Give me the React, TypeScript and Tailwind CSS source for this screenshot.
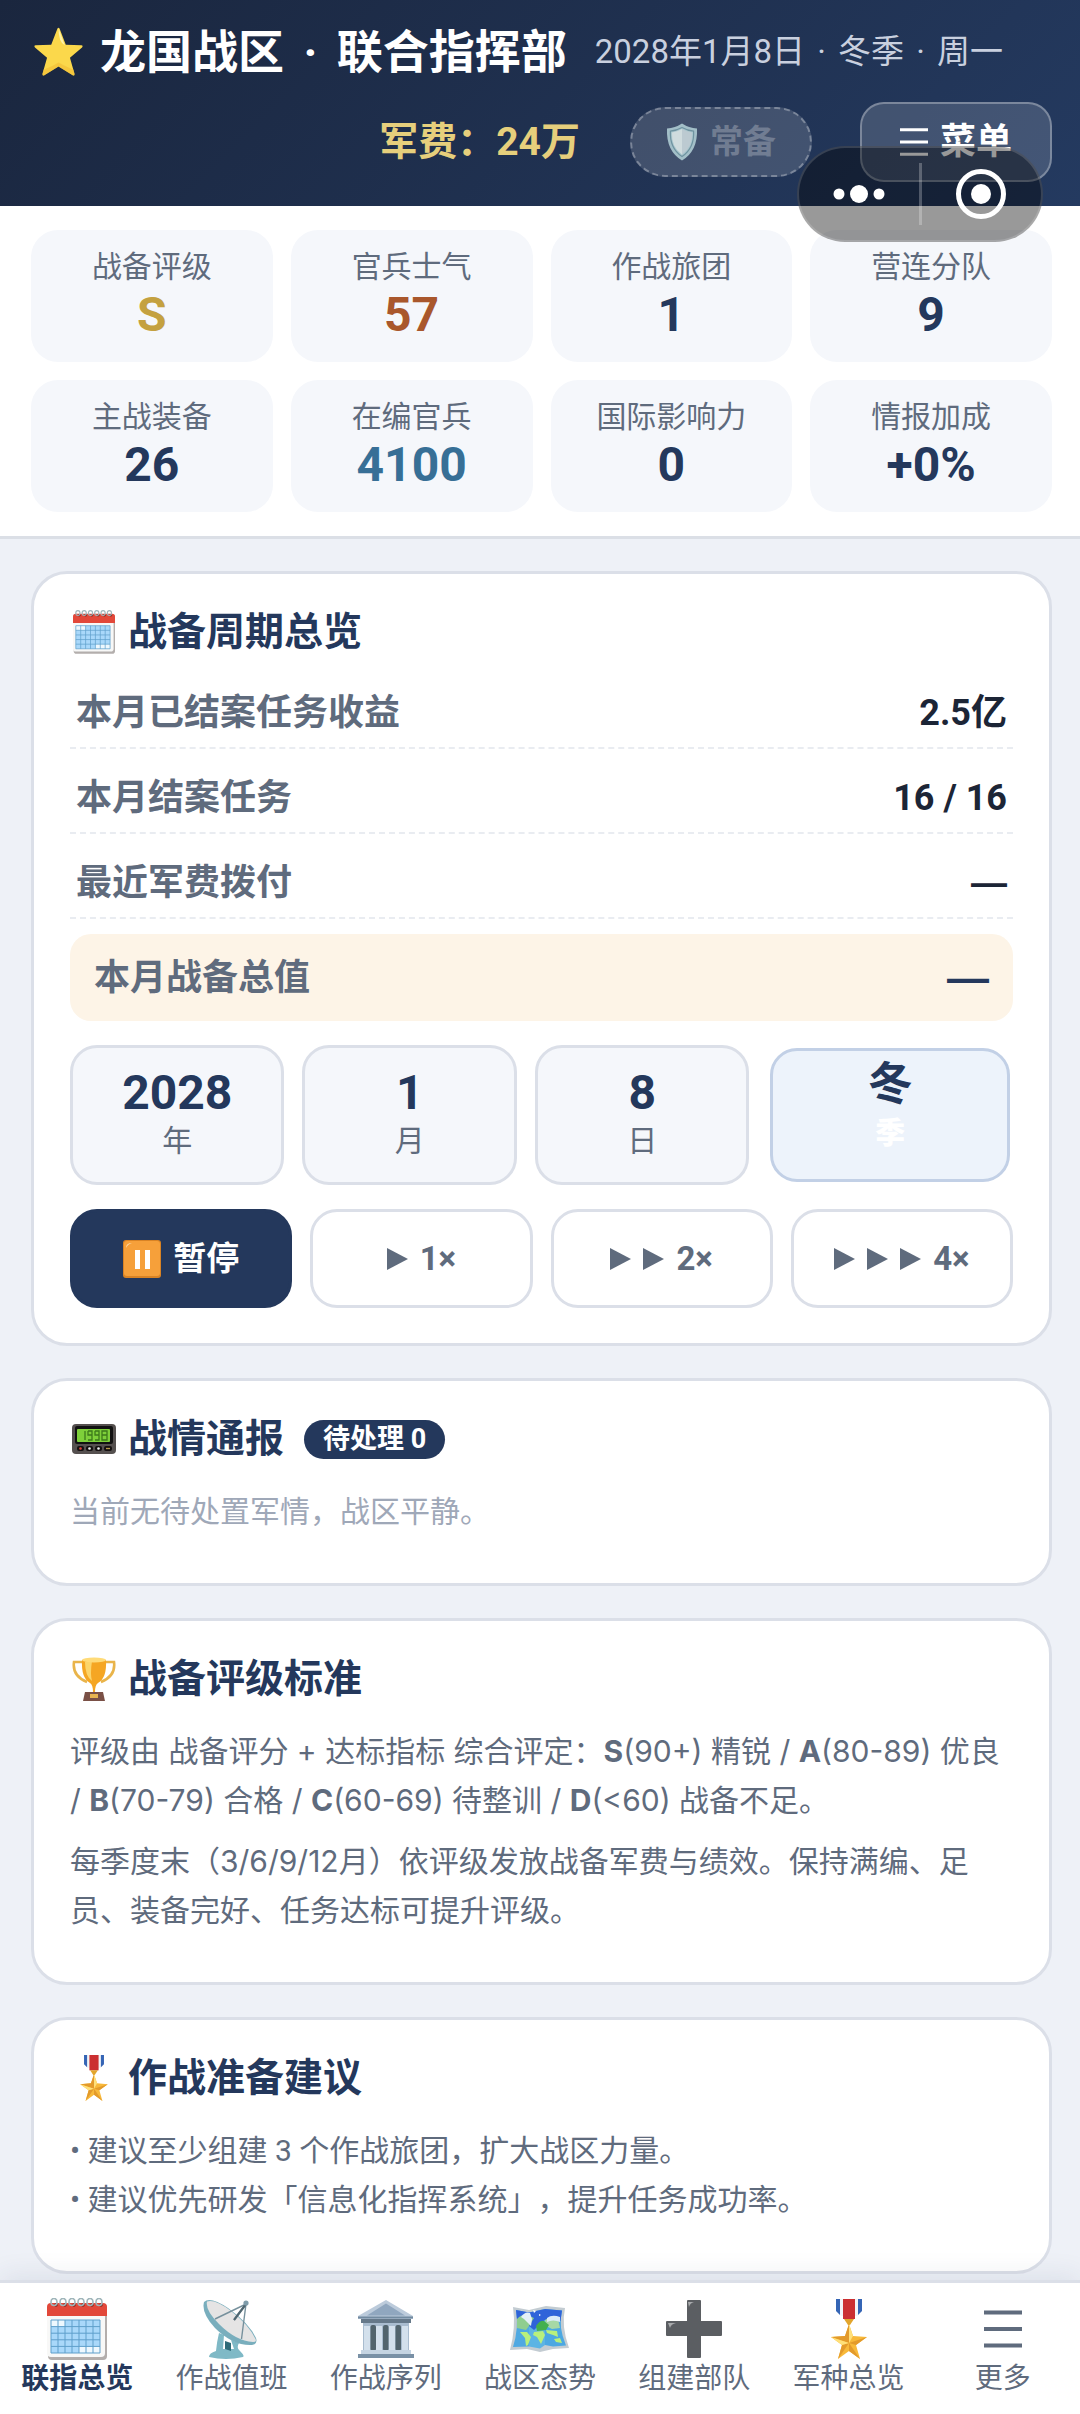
import React from 'react';

type IconProps = { className?: string };

const StarIcon = ({ className }: IconProps) => (
  <svg viewBox="0 0 48 48" className={className} aria-hidden="true">
    <path d="M23 1.5Q24 0 25 1.5L31 17L46 17.6Q48 18 46.6 19.6L35 29.500L39.400 45Q39.500 47 37.600 46.300L24 38L10.400 46.300Q8.500 47 8.600 45L13 29.500L1.400 19.600Q0 18 2 17.600L17 17Z" fill="#fbd84b" />
    <path d="M24 1L30 17.500Q27 16 25.500 12Q24 7 24 1Z" fill="#fff3a8" />
    <path d="M24 38L10.400 46.300Q8.500 47 8.600 45L9.500 41Q18 38 24 34Q31 38 38.500 41L39.400 45Q39.500 47 37.600 46.300Z" fill="#f2bd33" opacity=".6" />
  </svg>
);

const ShieldIcon = ({ className }: IconProps) => (
  <svg viewBox="0 0 32 38" className={className} aria-hidden="true">
    <path d="M16 0.500Q23 5 31 5.500Q32 28 16 37.500Q0 28 1 5.500Q9 5 16 0.500Z" fill="#a3bfc8" />
    <path d="M16 4.500Q21.500 7.600 27.600 8.200Q28.500 25 16 33.500Q3.500 25 4.400 8.200Q10.500 7.600 16 4.500Z" fill="#a9c6cd" stroke="#6f93a0" strokeWidth="1.200" />
    <path d="M16 6Q21 9 26 9.500Q27 24 16 31.500Z" fill="#bccad1" />
    <path d="M16 6Q11 9 6 9.500Q5 24 16 31.500Z" fill="#d0dcde" />
  </svg>
);

const CalendarIcon = ({ className }: IconProps) => (
  <svg viewBox="0 0 60 62" className={className} aria-hidden="true">
    <rect x="1" y="6" width="59" height="56" rx="4" fill="#b3aeac" />
    <rect x="0" y="5" width="58" height="54" rx="4" fill="#f8f8f7" />
    <path d="M0 18V9q0-4 4-4h52q4 0 4 4v9z" fill="#e2483a" />
    <rect x="4" y="22" width="49" height="33" fill="#a9d8fa" />
    <path d="M4 22h14v6.600H4zM32 48.400h21V55H32z" fill="#eef8fe" />
    <path d="M4 22h49v33H4zM4 28.600h49M4 35.200h49M4 41.800h49M4 48.400h49M11 22v33M18 22v33M25 22v33M32 22v33M39 22v33M46 22v33" fill="none" stroke="#5e9fcb" strokeWidth="1" />
    {[8, 17, 26, 35, 44, 53].map((x) => (
      <g key={x}>
        <circle cx={x + 1} cy="7" r="1.800" fill="#7c2a22" />
        <ellipse cx={x - 1} cy="4" rx="3" ry="3.500" fill="none" stroke="#9fb5ba" strokeWidth="1.600" />
      </g>
    ))}
  </svg>
);

const SatelliteIcon = ({ className }: IconProps) => (
  <svg viewBox="0 0 56 60" className={className} aria-hidden="true">
    <path d="M16 34L21 36L20 50L31 50Q29 44 28 41L36 44Q33 49 37 52Q42 57 40 58Q23 62 6 58Q6 54 13 52Q14 42 16 34Z" fill="#7fb9c6" />
    <path d="M22 42l6 2v8l-6-2z" fill="#2f6b78" />
    <path d="M1 3Q7-3 25 9Q46 24 53 39Q55 45 49 46Q30 47 12 29Q-2 14 1 3Z" fill="#79aebd" />
    <path d="M4 2.500Q12 0 28 12Q46 26 52.500 40Q54 43 50 43Q33 42 16 25Q2 11 4 2.500Z" fill="#e5e4e4" />
    <path d="M12 20L43 5L38.500 40M43 5L31 21" fill="none" stroke="#76909c" strokeWidth="1.400" />
    <path d="M31 21L43 5" stroke="#4f6670" strokeWidth="2.200" />
    <circle cx="43" cy="4" r="2.600" fill="#7f9caa" />
  </svg>
);

const PillarsIcon = ({ className }: IconProps) => (
  <svg viewBox="0 0 56 58" className={className} aria-hidden="true">
    <path d="M28 0L55 16V19H0V16Z" fill="#bccbdb" />
    <path d="M28 3.500L47 15.500H9Z" fill="#90a7bf" />
    <path d="M0 16.500h55v2H0z" fill="#718aa0" />
    <rect x="3" y="19" width="50" height="4" fill="#66798a" />
    <rect x="5" y="23" width="46" height="30" fill="#a9bccf" />
    <path d="M6 26h6v25H6zM18 26h6v25h-6zM31 26h6v25h-6zM44 26h6v25h-6z" fill="#d3e0ec" />
    <rect x="12.500" y="25" width="5.500" height="26" rx="2" fill="#52646d" />
    <rect x="25" y="25" width="5.500" height="26" rx="2" fill="#52646d" />
    <rect x="37.500" y="25" width="5.500" height="26" rx="2" fill="#52646d" />
    <path d="M3 50h50v4H3z" fill="#c5d4e2" />
    <path d="M0 54h56v4H0z" fill="#7a91a6" />
  </svg>
);

const MapIcon = ({ className }: IconProps) => (
  <svg viewBox="0 0 60 46" className={className} aria-hidden="true">
    <path d="M3 1L19 4L36 0L55 2Q51 20 59 42L43 43L30 46L17 43L0 44Q6 22 3 1Z" fill="#c3ccd2" />
    <path d="M6 4L19 6.500V40.500L3 41Q9 22 6 4Z" fill="#4fa9e2" />
    <path d="M19 6.500L35 3V39L30 42.500L19 40.500Z" fill="#5cb4e4" />
    <path d="M35 3L52 4.500Q48 21 56 39.500L43 40.500L35 39Z" fill="#4ca8e2" />
    <path d="M6 4L19 6.500L35 3L52 4.500L50.500 15Q36 10 30 18L24 24L19 20Q12 12 7 14Z" fill="#2f63d9" />
    <path d="M7 13q5-5 10-4l7 3-5 8-3 4-9-2z" fill="#8fce8f" />
    <path d="M11 11q4-6 9-4l2 6-1 7-3-3-4-4z" fill="#e3eff7" />
    <path d="M35 14q6-5 13-1l2 9-8 1-6-3z" fill="#a7d8a5" />
    <path d="M37 12q5-4 13-1v5q-7-3-13 0z" fill="#dbeaf7" />
    <path d="M26 20q4-6 8-5l5 4-3 5-9 1z" fill="#43b04e" />
    <path d="M10 26l7 0 4 5-3 8-2 1-1-8zM24 26l9-1 2 4-4 9-4-7-4-2zM36 24l11 1 1 6-5-2-6-2zM44 33l6-1 2 5-6-1z" fill="#b8f07c" />
    <path d="M23 4l3 1-2 2zM29 8l2 1-2 1z" fill="#fff" />
  </svg>
);

const PlusIcon = ({ className }: IconProps) => (
  <svg viewBox="0 0 56 58" className={className} aria-hidden="true">
    <path d="M22 0h12q1 0 1 1v20h20q1 0 1 1v13q0 1-1 1H35v21q0 1-1 1H22q-1 0-1-1V36H1q-1 0-1-1V22q0-1 1-1h20V1q0-1 1-1z" fill="#5b5e62" />
    <path d="M22 2h6q-4 1-5 5zM2 23h8q-5 1-6 5z" fill="#a9abad" />
  </svg>
);

const MedalIcon = ({ className }: IconProps) => (
  <svg viewBox="0 0 36 60" className={className} aria-hidden="true">
    <path d="M5 0h26v12l-5 5H10l-5-5z" fill="#f2f4f7" />
    <path d="M5 0h4v16l-4-4zM31 0h-4v16l4-4z" fill="#3565b5" />
    <path d="M12 0h12v20H12z" fill="#cb2f31" />
    <path d="M13 20h10l-4 6h-2z" fill="#e2a52c" />
    <path d="M18 25L22 37L36 38L25 46L29 60L18 52L7 60L11 46L0 38L14 37Z" fill="#f8b93a" />
    <path d="M18 25V44L14 37ZM36 38L18 44L25 46ZM29 60L18 44V52ZM7 60L18 44L11 46ZM0 38L18 44L14 37Z" fill="#e39a2b" />
    <path d="M18 25V44L22 37ZM0 38L18 44L11 46Z" fill="#ffe07a" />
  </svg>
);

const PagerIcon = ({ className }: IconProps) => (
  <svg viewBox="0 0 44 30" className={className} aria-hidden="true">
    <rect width="44" height="30" rx="4" fill="#55504f" />
    <rect x="3" y="2" width="38" height="18" rx="2" fill="#111" />
    <rect x="5" y="5" width="33" height="13" rx="1" fill="#7ed03a" />
    <path d="M13 7v9M16 7h4v9h-4M16 7v4h4M23 7h4v9h-4M23 7v4h4M30 7h5v9h-5zM30 11h5" fill="none" stroke="#3d7a1b" strokeWidth="1.300" />
    <rect x="5" y="22" width="7" height="5" rx="2" fill="#141010" />
    <rect x="14" y="22" width="7" height="5" rx="2" fill="#141010" />
    <rect x="23" y="22" width="7" height="5" rx="2" fill="#141010" />
    <rect x="32" y="22" width="8" height="5" rx="2" fill="#141010" />
    <circle cx="8.500" cy="24.500" r="1.300" fill="#e2403a" />
    <circle cx="17.500" cy="24.500" r="1.300" fill="#eee" />
    <circle cx="26.500" cy="24.500" r="1.300" fill="#eee" />
    <path d="M34 24.500h4" stroke="#b59a4a" strokeWidth="1.300" />
  </svg>
);

const TrophyIcon = ({ className }: IconProps) => (
  <svg viewBox="0 0 44 44" className={className} aria-hidden="true">
    <path d="M10 5H2q-2 14 13 20M34 5h8q2 14-13 20" fill="none" stroke="#e9b44a" strokeWidth="2.600" />
    <path d="M10 3q12-3 24 0q1 18-8 23q-3 2-3 9h-2q0-7-3-9Q9 21 10 3z" fill="#f5a623" />
    <path d="M13 5q4-1 7-1q-2 13 0 20Q13 19 13 5z" fill="#fcd56b" />
    <ellipse cx="22" cy="3" rx="12" ry="2.500" fill="#ffdb78" />
    <path d="M13 35h18l2 9H11z" fill="#7a5046" />
    <rect x="18" y="37" width="8" height="4" fill="#e8b451" />
  </svg>
);

const PauseIcon = ({ className }: IconProps) => (
  <svg viewBox="0 0 38 38" className={className} aria-hidden="true">
    <rect width="38" height="38" rx="3" fill="#d98324" />
    <rect x="1" y="1" width="36" height="35" rx="3" fill="#f6a03a" />
    <path d="M3 8q0-5 6-5q-4 1-6 5z" fill="#fbd9a8" />
    <path d="M12 10h5v19h-5zM22 10h5v19h-5z" fill="#fff" />
  </svg>
);

const BarsIcon = ({ className }: IconProps) => (
  <svg viewBox="0 0 38 38" className={className} aria-hidden="true">
    <path d="M0 2.500h38M0 19h38M0 35.500h38" stroke="currentColor" strokeWidth="4" />
  </svg>
);

const PlayIcon = () => (
  <svg viewBox="0 0 21 22" className="mr-3 h-[22px] w-[21px]" aria-hidden="true">
    <path d="M0 0L21 11L0 22Z" fill="currentColor" />
  </svg>
);

const stats = [
  { label: '战备评级', value: 'S', color: 'text-[#c4a140]' },
  { label: '官兵士气', value: '57', color: 'text-[#a9572c]' },
  { label: '作战旅团', value: '1', color: 'text-[#24385c]' },
  { label: '营连分队', value: '9', color: 'text-[#24385c]' },
  { label: '主战装备', value: '26', color: 'text-[#24385c]' },
  { label: '在编官兵', value: '4100', color: 'text-[#376f96]' },
  { label: '国际影响力', value: '0', color: 'text-[#24385c]' },
  { label: '情报加成', value: '+0%', color: 'text-[#24385c]' },
];

const summary = [
  { label: '本月已结案任务收益', value: '2.5亿' },
  { label: '本月结案任务', value: '16 / 16' },
  { label: '最近军费拨付', value: '—' },
];

const dateParts = [
  { value: '2028', unit: '年' },
  { value: '1', unit: '月' },
  { value: '8', unit: '日' },
];

const tabs = [
  { label: '联指总览', icon: <CalendarIcon className="h-[62px] w-[60px]" /> },
  { label: '作战值班', icon: <SatelliteIcon className="h-[60px] w-14" /> },
  { label: '作战序列', icon: <PillarsIcon className="h-[58px] w-14" /> },
  { label: '战区态势', icon: <MapIcon className="h-[46px] w-[60px]" /> },
  { label: '组建部队', icon: <PlusIcon className="h-[58px] w-14" /> },
  { label: '军种总览', icon: <MedalIcon className="h-[60px] w-9" /> },
  { label: '更多', icon: <BarsIcon className="h-[38px] w-[38px]" /> },
];

interface CardProps {
  icon: React.ReactNode;
  title: string;
  badge?: string;
  children: React.ReactNode;
}

const Card: React.FC<CardProps> = ({ icon, title, badge, children }) => (
  <section className="rounded-[36px] border-[3px] border-[#dbdfe8] bg-white px-9 pb-[35px] pt-8">
    <h2 className="flex h-[52px] items-center text-[39px] font-bold leading-[52px] text-[#24385c]">
      <span className="mr-[10px] flex w-12 justify-center">{icon}</span>
      {title}
      {badge && (
        <span className="ml-5 rounded-full bg-[#24385c] px-[19px] text-[27px] leading-[39px] text-white">{badge}</span>
      )}
    </h2>
    {children}
  </section>
);

export default function App() {
  const [speed, setSpeed] = React.useState(0);
  const [tab, setTab] = React.useState('联指总览');

  return (
    <div className="relative flex min-h-screen flex-col bg-[#eef1f7] font-[Roboto,'Noto_Sans_CJK_SC',sans-serif] text-[#5f6b7d] [text-spacing-trim:space-all]">
      <header className="bg-linear-135 from-[#1a263e] to-[#243a60] pb-6 pl-[31px] pr-[28px] pt-5 text-white">
        <div className="flex h-16 items-center">
          <StarIcon className="ml-[2px] mr-4 h-[50px] w-[51px]" />
          <h1 className="text-[46px] font-bold">
            龙国战区<span className="mx-2"> · </span>联合指挥部
          </h1>
          <p className="ml-7 text-[33px] text-[#c9d0df]">
            2028年1月8日<span className="mx-1"> · </span>冬季<span className="mx-1"> · </span>周一
          </p>
        </div>
        <div className="mt-[18px] flex h-20 items-center justify-end">
          <span className="mr-[50px] text-[39px] font-bold text-[#e6cf7c]">军费：24万</span>
          <button
            type="button"
            disabled
            className="mr-12 flex h-[70px] w-[182px] items-center justify-center gap-3 rounded-full border-2 border-dashed border-white/30 bg-white/15 text-[33px] font-bold text-white/25"
          >
            <ShieldIcon className="h-[38px] w-8" />
            常备
          </button>
          <button
            type="button"
            className="flex h-20 w-48 items-center justify-center gap-3 rounded-[24px] border-2 border-white/30 bg-white/15 text-[36px] font-bold text-white"
          >
            <BarsIcon className="h-7 w-7" />
            菜单
          </button>
        </div>
      </header>

      {/* Mini-program capsule floating above the page */}
      <div className="absolute right-[37px] top-[146px] flex h-24 w-[246px] items-center rounded-full border-2 border-white/15 bg-black/40">
        <button type="button" aria-label="更多操作" className="flex h-full flex-1 items-center justify-center">
          <svg viewBox="0 0 52 20" className="h-5 w-[52px]" fill="#fff" aria-hidden="true">
            <circle cx="6" cy="10" r="5.500" />
            <circle cx="26" cy="10" r="9" />
            <circle cx="46" cy="10" r="5.500" />
          </svg>
        </button>
        <span className="h-[62px] w-[3px] bg-white/25" />
        <button type="button" aria-label="关闭" className="flex h-full flex-1 items-center justify-center">
          <svg viewBox="0 0 52 52" className="h-[52px] w-[52px]" aria-hidden="true">
            <circle cx="26" cy="26" r="22.500" fill="none" stroke="#fff" strokeWidth="5" />
            <circle cx="26" cy="26" r="10" fill="#fff" />
          </svg>
        </button>
      </div>

      <dl className="grid grid-cols-4 gap-[18px] border-b-[3px] border-[#dbdfe6] bg-white py-6 pl-[31px] pr-[28px] text-center">
        {stats.map((s) => (
          <div key={s.label} className="rounded-[27px] bg-[#f5f7fb] pb-[19px] pt-[17px]">
            <dt className="text-[30px] leading-10">{s.label}</dt>
            <dd className={`text-[48px] font-bold leading-[56px] ${s.color}`}>{s.value}</dd>
          </div>
        ))}
      </dl>

      <main className="flex flex-col gap-8 pb-1 pl-[31px] pr-[28px] pt-8">
        <Card icon={<CalendarIcon className="h-11 w-[42px]" />} title="战备周期总览">
          <dl className="mt-[6px]">
            {summary.map((row) => (
              <div key={row.label} className="flex h-[85px] items-center justify-between border-b-2 border-dashed border-[#e9ecf1] px-[6px] pt-[14px]">
                <dt className="text-[36px] font-bold">{row.label}</dt>
                <dd className={`text-[36px] font-bold text-[#1c2536] ${row.value === '—' ? "font-['Liberation_Sans',sans-serif]" : ''}`}>
                  {row.value}
                </dd>
              </div>
            ))}
            <div className="mt-[15px] flex h-[87px] items-center justify-between rounded-[21px] bg-[#fdf4e7] px-6">
              <dt className="text-[36px] font-bold">本月战备总值</dt>
              <dd className="font-['Liberation_Sans',sans-serif] text-[42px] font-bold text-[#24385c]">—</dd>
            </div>
          </dl>

          <div className="mt-6 grid grid-cols-[214fr_214fr_214fr_245fr] gap-[18px] text-center">
            {dateParts.map((d) => (
              <div key={d.unit} className="h-[140px] rounded-[27px] border-[3px] border-[#dbdfe8] bg-[#f5f7fb] pt-[17px]">
                <div className="text-[48px] font-bold leading-[56px] text-[#24385c]">{d.value}</div>
                <div className="text-[30px] leading-10">{d.unit}</div>
              </div>
            ))}
            <div className="mx-[3px] my-[3px] rounded-[27px] border-[3px] border-[#c2d0e6] bg-[#edf3fb] pt-[6px]">
              <div className="text-[45px] font-bold leading-[56px] text-[#24385c]">冬</div>
              <div className="text-[30px] font-black leading-10 text-white">季</div>
            </div>
          </div>

          <div className="mt-6 grid grid-cols-4 gap-[18px]">
            {['暂停', '1×', '2×', '4×'].map((label, i) => (
              <button
                key={label}
                type="button"
                onClick={() => setSpeed(i)}
                className={`flex h-[99px] items-center justify-center rounded-[27px] border-[3px] text-[33px] font-bold ${
                  speed === i ? 'border-[#24385c] bg-[#24385c] text-white' : 'border-[#dbdfe8] bg-white'
                }`}
              >
                {i === 0 && <PauseIcon className="mr-3 h-[38px] w-[38px]" />}
                {i > 0 && <PlayIcon />}
                {i > 1 && <PlayIcon />}
                {i > 2 && <PlayIcon />}
                {label}
              </button>
            ))}
          </div>
        </Card>

        <Card icon={<PagerIcon className="h-[30px] w-11" />} title="战情通报" badge="待处理 0">
          <p className="mb-3 mt-[22px] text-[30px] leading-[49px] text-[#9fa8b8]">当前无待处置军情，战区平静。</p>
        </Card>

        <Card icon={<TrophyIcon className="h-11 w-11" />} title="战备评级标准">
          <div className="mb-3 mt-[22px] font-[Inter,'Noto_Sans_CJK_SC',sans-serif] text-[30px] leading-[49px]">
            <p>
              评级由 战备评分 + 达标指标 综合评定：<b>S</b>(90+) 精锐 / <b>A</b>(80-89) 优良 /&nbsp;<b>B</b>(70-79) 合格 / <b>C</b>(60-69) 待整训 / <b>D</b>(&lt;60) 战备不足。
            </p>
            <p className="mt-3">
              每季度末（3/6/9/12月）依评级发放战备军费与绩效。保持满编、足员、装备完好、任务达标可提升评级。
            </p>
          </div>
        </Card>

        <Card icon={<MedalIcon className="h-[46px] w-7" />} title="作战准备建议">
          <div className="mb-3 mt-[22px] text-[30px] leading-[49px]">
            <p>• 建议至少组建 3 个作战旅团，扩大战区力量。</p>
            <p>• 建议优先研发「信息化指挥系统」，提升任务成功率。</p>
          </div>
        </Card>
      </main>

      <nav className="sticky bottom-0 mt-auto grid grid-cols-7 border-t-[3px] border-[#dbdfe8] bg-white pb-[17px] pt-[14px] shadow-[0_-6px_24px_rgba(36,56,92,0.08)]">
        {tabs.map((t) => (
          <button
            key={t.label}
            type="button"
            onClick={() => setTab(t.label)}
            className={`flex flex-col items-center text-[28px] leading-9 ${tab === t.label ? 'font-bold text-[#24385c]' : ''}`}
          >
            <span className="flex h-16 items-center">{t.icon}</span>
            {t.label}
          </button>
        ))}
      </nav>
    </div>
  );
}
